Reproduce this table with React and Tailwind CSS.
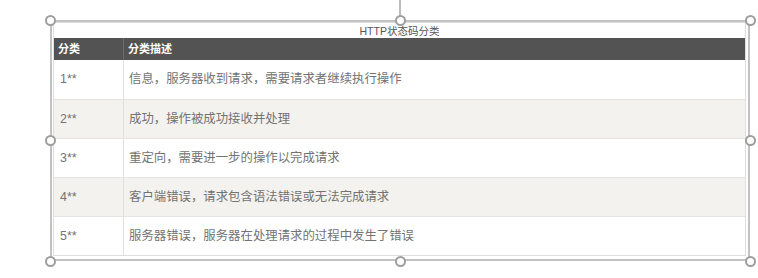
import React from 'react';

const rows = [
  { code: '1**', desc: '信息，服务器收到请求，需要请求者继续执行操作' },
  { code: '2**', desc: '成功，操作被成功接收并处理' },
  { code: '3**', desc: '重定向，需要进一步的操作以完成请求' },
  { code: '4**', desc: '客户端错误，请求包含语法错误或无法完成请求' },
  { code: '5**', desc: '服务器错误，服务器在处理请求的过程中发生了错误' },
];

const handles = [
  'left-[45px] top-[15px]',
  'left-[395px] top-[15px]',
  'left-[745px] top-[15px]',
  'left-[45px] top-[135px]',
  'left-[745px] top-[135px]',
  'left-[45px] top-[256px]',
  'left-[395px] top-[256px]',
  'left-[745px] top-[256px]',
];

const App = () => {
  return (
    <div
      className="relative w-[758px] h-[278px] bg-white overflow-hidden"
      style={{ fontFamily: '"Liberation Sans", "Noto Sans CJK SC", sans-serif' }}
    >
      <div className="pt-[22px] pl-[53px]">
        <div className="w-[693px] border border-[#dedede]">
          <div className="h-[15px] text-center text-[10.5px] leading-[16px] text-[#555]">
            HTTP状态码分类
          </div>
          <div className="flex h-[22px] bg-[#535353] text-white text-[11px] font-bold leading-[22px]">
            <div className="w-[70px] pl-[4px] border-r border-[#6a6a6a]">分类</div>
            <div className="flex-1 pl-[4px]">分类描述</div>
          </div>
          {rows.map((r, i) => (
            <div
              key={r.code}
              className={`flex h-[39px] items-center text-[12.4px] text-[#737373] ${
                i % 2 === 1 ? 'bg-[#f4f2ee]' : 'bg-white'
              } ${i > 0 ? 'border-t border-[#e6e4e0]' : ''}`}
            >
              <div className="w-[70px] h-full flex items-center pl-[6px] border-r border-[#e2e0dc]">
                {r.code}
              </div>
              <div className="flex-1 pl-[5px]">{r.desc}</div>
            </div>
          ))}
        </div>
      </div>

      {/* selection frame */}
      <div className="absolute left-[50px] top-[20px] w-[700px] h-[241px] border-2 border-[#c2c2c2]" />
      <div className="absolute left-[399px] top-0 w-[2px] h-[16px] bg-[#bdbdbd]" />
      {handles.map((h) => (
        <div
          key={h}
          className={`absolute ${h} w-[11px] h-[11px] rounded-full border-2 border-[#9e9e9e] bg-white`}
        />
      ))}
    </div>
  );
};

export default App;
